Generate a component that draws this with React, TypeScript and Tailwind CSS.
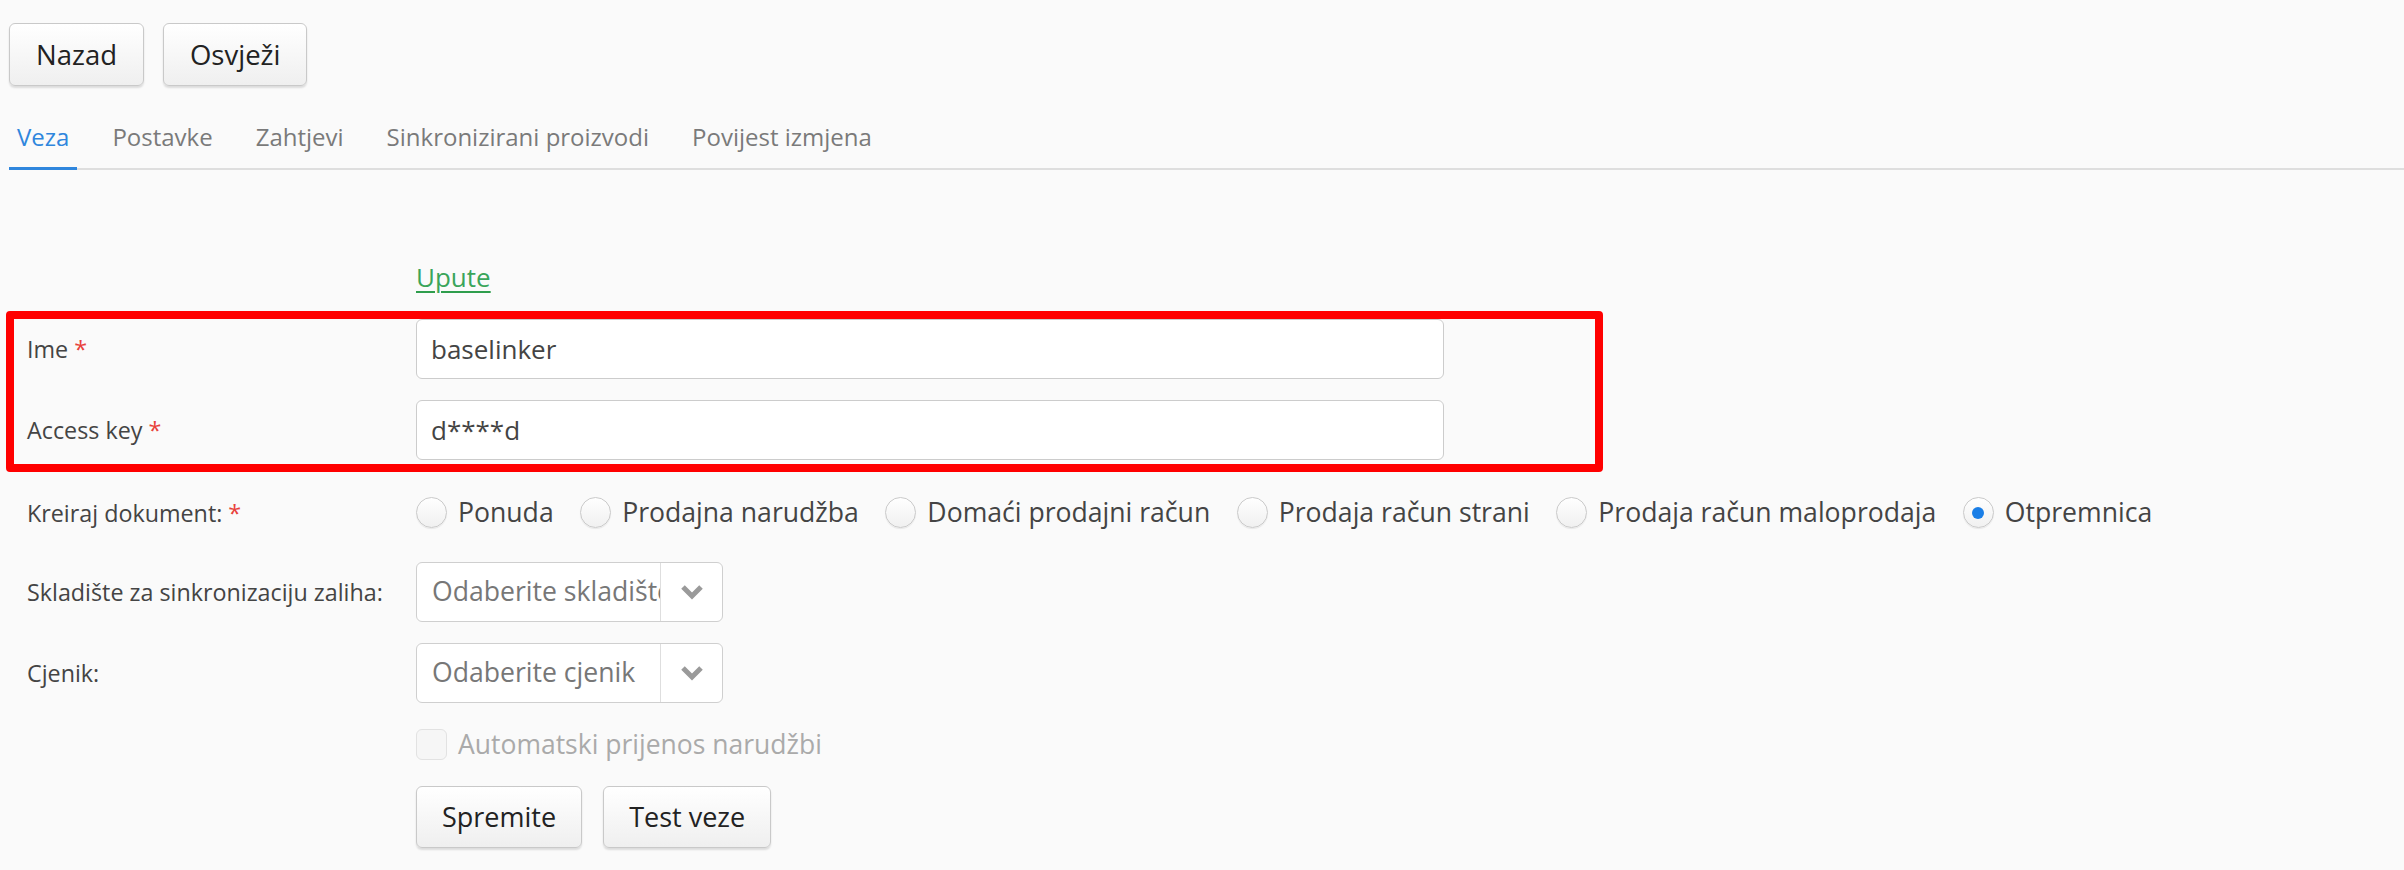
import { ReactNode } from 'react'

const TABS = ['Veza', 'Postavke', 'Zahtjevi', 'Sinkronizirani proizvodi', 'Povijest izmjena']

const DOC_TYPES = [
  'Ponuda',
  'Prodajna narudžba',
  'Domaći prodajni račun',
  'Prodaja račun strani',
  'Prodaja račun maloprodaja',
  'Otpremnica',
]

function Btn({ children, cls }: { children: ReactNode; cls: string }) {
  return (
    <button
      className={`${cls} rounded-[6px] border border-[#c9c9c9] bg-gradient-to-b from-white to-[#efefef] text-[#222] shadow-[0_2px_2px_rgba(0,0,0,0.12)]`}
    >
      {children}
    </button>
  )
}

function Label({ text, required }: { text: string; required?: boolean }) {
  return (
    <div className="text-[23.3px] text-[#444] flex items-center">
      <span>{text}</span>
      {required && <span className="ml-[6px] text-[#e8413b]">*</span>}
    </div>
  )
}

function Chevron() {
  return (
    <svg width="24" height="16" viewBox="0 0 24 16" fill="none">
      <path d="M3 3l9 9 9-9" stroke="#9a9a9a" strokeWidth="5" strokeLinejoin="miter" />
    </svg>
  )
}

function Select({ placeholder }: { placeholder: string }) {
  return (
    <div className="flex w-[307px] h-[60px] bg-white border border-[#cfcfcf] rounded-[6px] overflow-hidden">
      <div className="flex-1 min-w-0 pl-[15px] flex items-center text-[26.6px] text-[#777] whitespace-nowrap overflow-hidden">
        {placeholder}
      </div>
      <div className="w-[62px] border-l border-[#dedede] flex items-center justify-center">
        <Chevron />
      </div>
    </div>
  )
}

export default function App() {
  return (
    <div
      className="min-h-[870px] w-full bg-[#fafafa] text-[#444]"
      style={{ fontFamily: '"Open Sans", "Noto Sans", sans-serif' }}
    >
      {/* Top actions */}
      <div className="flex gap-[19px] pl-[9px] pt-[23px]">
        <Btn cls="h-[63px] px-[26px] text-[27.5px]">Nazad</Btn>
        <Btn cls="h-[63px] px-[26px] text-[27.5px]">Osvježi</Btn>
      </div>

      {/* Tabs */}
      <div className="mt-[35px] ml-[9px] flex gap-[27px] border-b-2 border-[#dedede]">
        {TABS.map((t, i) => (
          <div
            key={t}
            className={`px-[8px] pb-[14px] leading-[32px] text-[24px] border-b-[3px] -mb-[2px] ${
              i === 0 ? 'text-[#2f86dd] border-[#2f86dd]' : 'text-[#7a7a7a] border-transparent'
            }`}
          >
            {t}
          </div>
        ))}
      </div>

      {/* Form */}
      <div className="flex flex-col">
        <div className="mt-[88px] h-[35px] grid grid-cols-[416px_1fr] items-center">
          <div />
          <a className="text-[26px] text-[#3aa55a] underline decoration-[#2e9d4c] decoration-2 underline-offset-[4px] w-fit">
            Upute
          </a>
        </div>

        <div className="relative mt-[26px] flex flex-col gap-[21px]">
          <div className="pl-[27px] h-[60px] grid grid-cols-[389px_1fr] items-center">
            <Label text="Ime" required />
            <div className="w-[1028px] h-[60px] bg-white border border-[#cccccc] rounded-[6px] flex items-center pl-[14px] text-[26px] text-[#444]">
              baselinker
            </div>
          </div>
          <div className="pl-[27px] h-[60px] grid grid-cols-[389px_1fr] items-center">
            <Label text="Access key" required />
            <div className="w-[1028px] h-[60px] bg-white border border-[#cccccc] rounded-[6px] flex items-center pl-[14px] text-[26px] text-[#444]">
              d****d
            </div>
          </div>
          <div className="pointer-events-none absolute left-[6px] w-[1597px] -top-[8px] -bottom-[12px] border-[8px] border-[#ff0000] rounded-[4px]" />
        </div>

        <div className="mt-[23px] pl-[27px] h-[60px] grid grid-cols-[389px_1fr] items-center">
          <Label text="Kreiraj dokument:" required />
          <div className="flex items-center gap-[26.5px]">
            {DOC_TYPES.map((d, i) => (
              <div key={d} className="flex items-center gap-[11px]">
                <span className="w-[31px] h-[31px] rounded-full border border-[#cacaca] bg-gradient-to-b from-white to-[#f0f0f0] shadow-[0_1px_1px_rgba(0,0,0,0.08)] flex items-center justify-center">
                  {i === DOC_TYPES.length - 1 && <span className="w-[12px] h-[12px] rounded-full bg-[#1a7ee6]" />}
                </span>
                <span className="text-[26.6px] text-[#444]">{d}</span>
              </div>
            ))}
          </div>
        </div>

        <div className="mt-[19px] pl-[27px] h-[60px] grid grid-cols-[389px_1fr] items-center">
          <Label text="Skladište za sinkronizaciju zaliha:" />
          <Select placeholder="Odaberite skladište" />
        </div>

        <div className="mt-[21px] pl-[27px] h-[60px] grid grid-cols-[389px_1fr] items-center">
          <Label text="Cjenik:" />
          <Select placeholder="Odaberite cjenik" />
        </div>

        <div className="mt-[22px] pl-[27px] h-[32px] grid grid-cols-[389px_1fr] items-center">
          <div />
          <div className="flex items-center gap-[11px]">
            <span className="w-[31px] h-[31px] rounded-[6px] border border-[#e2e2e2] bg-[#f6f6f6]" />
            <span className="text-[26.5px] text-[#aaaaaa]">Automatski prijenos narudžbi</span>
          </div>
        </div>

        <div className="mt-[29px] pl-[27px] grid grid-cols-[389px_1fr] items-center">
          <div />
          <div className="flex gap-[21px]">
            <Btn cls="h-[62px] px-[25px] text-[27px]">Spremite</Btn>
            <Btn cls="h-[62px] px-[25px] text-[27px]">Test veze</Btn>
          </div>
        </div>
      </div>
    </div>
  )
}
